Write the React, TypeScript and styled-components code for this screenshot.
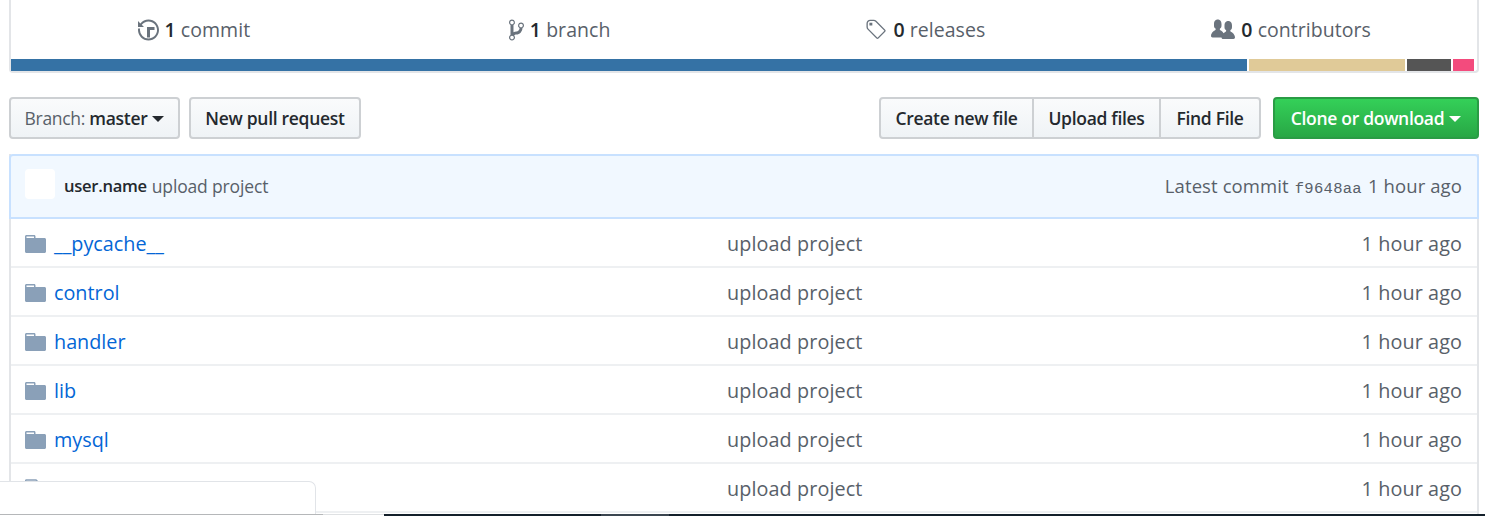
import React from 'react';
import styled, { createGlobalStyle } from 'styled-components';

const Global = createGlobalStyle`
  html, body { margin: 0; padding: 0; background: #fff; height: 516px; overflow: hidden; }
  body { font-family: "Open Sans", "Noto Sans", "Liberation Sans", sans-serif; }
  * { box-sizing: border-box; }
`;

const Page = styled.div`
  position: relative;
  width: 1485px;
  height: 516px;
  overflow: hidden;
  padding: 0 6px 0 9px;
  display: flex;
  flex-direction: column;
`;

const Summary = styled.div`
  height: 73px;
  border: 2px solid #e3e5e8;
  border-top: 0;
  border-radius: 0 0 4px 4px;
  display: flex;
  flex-direction: column;
`;

const Stats = styled.div`
  height: 59px;
  padding: 0 3px 0 0;
  display: grid;
  grid-template-columns: repeat(4, 1fr);
  align-items: center;
`;

const Stat = styled.div`
  display: flex;
  align-items: center;
  justify-content: center;
  gap: 6px;
  font-size: 19.5px;
  letter-spacing: 0.05px;
  color: #586069;
  white-space: nowrap;
`;

const Num = styled.b`
  font-weight: 600;
  color: #24292e;
`;

const LangBar = styled.div`
  height: 12px;
  display: flex;
  gap: 2px;
`;

const Lang = styled.span<{ $w: number; $c: string }>`
  width: ${p => p.$w}px;
  background: ${p => p.$c};
  flex: none;
`;

const Toolbar = styled.div`
  margin-top: 24px;
  height: 42px;
  display: flex;
  align-items: stretch;
  justify-content: space-between;
`;

const Group = styled.div`
  display: flex;
  gap: 9px;
`;

const Btn = styled.div<{ $w: number }>`
  display: flex;
  align-items: center;
  justify-content: center;
  gap: 5px;
  width: ${p => p.$w}px;
  height: 42px;
  border: 2px solid #cdd0d3;
  border-radius: 4px;
  background: linear-gradient(#fafbfc, #eff3f6);
  color: #24292e;
  font-size: 17.5px;
  font-weight: 600;
  letter-spacing: -0.3px;
  white-space: nowrap;
`;

const GreenBtn = styled(Btn)`
  border-color: #2a9c45;
  background: linear-gradient(#34d058, #28a745);
  color: #fff;
  margin-left: 3px;
`;

const Caret = styled.span<{ $c?: string }>`
  display: inline-block;
  width: 0;
  height: 0;
  border-left: 6px solid transparent;
  border-right: 6px solid transparent;
  border-top: 6px solid ${p => p.$c || '#24292e'};
  margin-top: 2px;
`;

const Light = styled.span`
  font-weight: 400;
  color: #586069;
`;

const BtnGroup = styled.div`
  display: flex;
  margin-left: -1px;
  & > ${Btn} { border-radius: 0; margin-left: -2px; }
  & > ${Btn}:first-child { border-radius: 4px 0 0 4px; margin-left: 0; }
  & > ${Btn}:last-child { border-radius: 0 4px 4px 0; }
`;

const Files = styled.div`
  margin-top: 15px;
  border: 2px solid #e3e5e8;
  border-bottom: 0;
  border-top: 0;
  flex: 1;
`;

const Commit = styled.div`
  height: 65px;
  margin: 0 -2px;
  background: #f1f8ff;
  border: 2px solid #c8e1ff;
  border-radius: 4px 4px 0 0;
  display: flex;
  align-items: center;
  padding: 0 15px 2px 14px;
  font-size: 17.5px;
  letter-spacing: -0.15px;
  color: #586069;
  white-space: nowrap;
`;

const Avatar = styled.span`
  width: 30px;
  height: 30px;
  border-radius: 4px;
  background: #fff;
  margin: 0 9px 3px 0;
  flex: none;
`;

const Author = styled.b`
  font-weight: 600;
  color: #24292e;
  margin-right: 5px;
  font-size: 16.6px;
  letter-spacing: -0.3px;
`;

const Right = styled.span`
  margin-left: auto;
  display: flex;
  align-items: baseline;
  gap: 6px;
  font-size: 18.5px;
  letter-spacing: 0.1px;
`;

const Sha = styled.code`
  font-family: "Liberation Mono", monospace;
  font-size: 15.5px;
  letter-spacing: 0.3px;
`;

const Row = styled.div`
  height: 49px;
  border-bottom: 2px solid #eef0f2;
  display: grid;
  grid-template-columns: 702px 1fr auto;
  align-items: center;
  padding: 2px 15px 0 14px;
  font-size: 19.8px;
  letter-spacing: 0.1px;
  color: #586069;
  white-space: nowrap;
`;

const Name = styled.span`
  display: flex;
  align-items: center;
  gap: 8px;
  color: #0366d6;
  letter-spacing: 0;
`;

const Overlay = styled.div`
  position: absolute;
  left: -2px;
  bottom: 2px;
  width: 318px;
  height: 33px;
  background: #fff;
  border: 1px solid #e1e4e8;
  border-bottom: 0;
  border-radius: 0 7px 0 0;
`;

const Strip = styled.div`
  position: absolute;
  left: 0;
  right: 0;
  bottom: 0;
  height: 2px;
  display: flex;
  background: #fff;
`;

const StripLight = styled.span`
  width: 384px;
  height: 1px;
  background: linear-gradient(to right, #b5b7b9 0 323px, #dfe1e3 323px);
`;

const StripDark = styled.span`
  flex: 1;
  display: flex;
  padding-left: 217px;
  background: #14202b;
`;

const StripTab = styled.span`
  width: 68px;
  background: #3b4650;
`;

const Icon = styled.svg`
  fill: currentColor;
  flex: none;
  display: block;
`;

const GrayIcon = styled(Icon)`
  color: #6a737d;
`;

const FolderIcon = styled(Icon)`
  color: #8aa0b8;
`;

const FileIcon = styled(Icon)`
  color: #8aa0b8;
  margin-right: 5px;
`;

const HistoryIcon = () => (
  <GrayIcon width="21" height="24" viewBox="0 0 14 16">
    <path fillRule="evenodd" d="M8 13H6V6h5v2H8v5zM7 1C4.81 1 2.87 2.02 1.59 3.59L0 2v4h4L2.5 4.5C3.55 3.17 5.17 2.3 7 2.3c3.14 0 5.7 2.56 5.7 5.7s-2.56 5.7-5.7 5.7A5.71 5.71 0 0 1 1.3 8c0-.34.03-.67.09-1H.08C.03 7.33 0 7.66 0 8c0 3.86 3.14 7 7 7s7-3.14 7-7-3.14-7-7-7z" />
  </GrayIcon>
);

const BranchIcon = () => (
  <GrayIcon width="15" height="24" viewBox="0 0 10 16">
    <path fillRule="evenodd" d="M10 5c0-1.11-.89-2-2-2a1.993 1.993 0 0 0-1 3.72v.3c-.02.52-.23.98-.63 1.38-.4.4-.86.61-1.38.63-.83.02-1.48.16-2 .45V4.72a1.993 1.993 0 0 0-1-3.72C.88 1 0 1.89 0 3a2 2 0 0 0 1 1.72v6.56c-.59.35-1 .99-1 1.72 0 1.11.89 2 2 2 1.11 0 2-.89 2-2 0-.53-.2-1-.53-1.36.09-.06.48-.41.59-.47.25-.11.56-.17.94-.17 1.05-.05 1.95-.45 2.75-1.25S8.95 7.77 9 6.73h-.02C9.59 6.37 10 5.73 10 5zM2 1.8c.66 0 1.2.55 1.2 1.2 0 .65-.55 1.2-1.2 1.2C1.35 4.2.8 3.65.8 3c0-.65.55-1.2 1.2-1.2zm0 12.41c-.66 0-1.2-.55-1.2-1.2 0-.65.55-1.2 1.2-1.2.65 0 1.2.55 1.2 1.2 0 .65-.55 1.2-1.2 1.2zm6-8c-.66 0-1.2-.55-1.2-1.2 0-.65.55-1.2 1.2-1.2.65 0 1.2.55 1.2 1.2 0 .65-.55 1.2-1.2 1.2z" />
  </GrayIcon>
);

const TagIcon = () => (
  <GrayIcon width="22" height="24" viewBox="0 0 15 16">
    <path fillRule="evenodd" d="M7.73 1.73C7.26 1.26 6.62 1 5.96 1H3.5C2.13 1 1 2.13 1 3.5v2.47c0 .66.27 1.3.73 1.77l6.06 6.06c.39.39 1.02.39 1.41 0l4.59-4.59a.996.996 0 0 0 0-1.41L7.73 1.73zM2.38 7.09c-.31-.3-.47-.7-.47-1.13V3.5c0-.88.72-1.59 1.59-1.59h2.47c.42 0 .83.16 1.13.47l6.14 6.13-4.73 4.73-6.13-6.15zM3 3h2v2H3V3z" />
  </GrayIcon>
);

const PeopleIcon = () => (
  <GrayIcon width="24" height="24" viewBox="0 0 16 16">
    <path fillRule="evenodd" d="M16 12.999c0 .439-.45 1-1 1H7.995c-.539 0-.994-.447-.995-.999H1c-.54 0-1-.561-1-1 0-2.634 3-4 3-4s.229-.409 0-1c-.841-.621-1.058-.59-1-3 .058-2.419 1.367-3 2.5-3s2.442.58 2.5 3c.058 2.41-.159 2.379-1 3-.229.59 0 1 0 1s1.549.711 2.42 2.088C9.196 9.369 10 8.999 10 8.999s.229-.409 0-1c-.841-.62-1.058-.59-1-3 .058-2.419 1.367-3 2.5-3s2.437.581 2.495 3c.059 2.41-.158 2.38-1 3-.229.59 0 1 0 1s3.005 1.366 3.005 4z" />
  </GrayIcon>
);

const Folder = () => (
  <FolderIcon width="21" height="24" viewBox="0 0 14 16" preserveAspectRatio="none">
    <path fillRule="evenodd" d="M13 4H7V3c0-.66-.31-1-1-1H1c-.55 0-1 .45-1 1v10c0 .55.45 1 1 1h12c.55 0 1-.45 1-1V5c0-.55-.45-1-1-1zM6 4H1V3h5v1z" />
  </FolderIcon>
);

const File = () => (
  <FileIcon width="16" height="21" viewBox="0 0 12 16" preserveAspectRatio="none">
    <path fillRule="evenodd" d="M6 5H2V4h4v1zM2 8h7V7H2v1zm0 2h7V9H2v1zm0 2h7v-1H2v1zm10-7.5V14c0 .55-.45 1-1 1H1c-.55 0-1-.45-1-1V2c0-.55.45-1 1-1h7.5L12 4.5zM11 5L8 2H1v12h10V5z" />
  </FileIcon>
);

const rows = [
  { name: '__pycache__', file: false },
  { name: 'control', file: false },
  { name: 'handler', file: false },
  { name: 'lib', file: false },
  { name: 'mysql', file: false },
  { name: 'supervisord', file: true },
];

export default function App() {
  return (
    <Page>
      <Global />
      <Summary>
        <Stats>
          <Stat><HistoryIcon /><span><Num>1</Num> commit</span></Stat>
          <Stat><BranchIcon /><span><Num>1</Num> branch</span></Stat>
          <Stat><TagIcon /><span><Num>0</Num> releases</span></Stat>
          <Stat><PeopleIcon /><span><Num>0</Num> contributors</span></Stat>
        </Stats>
        <LangBar>
          <Lang $w={1236} $c="#3572a5" />
          <Lang $w={156} $c="#e0ca98" />
          <Lang $w={44} $c="#555555" />
          <Lang $w={21} $c="#f34b7d" />
        </LangBar>
      </Summary>
      <Toolbar>
        <Group>
          <Btn $w={171}><span><Light>Branch:</Light> master</span><Caret /></Btn>
          <Btn $w={172}>New pull request</Btn>
        </Group>
        <Group>
          <BtnGroup>
            <Btn $w={155}>Create new file</Btn>
            <Btn $w={129}>Upload files</Btn>
            <Btn $w={102}>Find File</Btn>
          </BtnGroup>
          <GreenBtn $w={206}>Clone or download<Caret $c="#fff" /></GreenBtn>
        </Group>
      </Toolbar>
      <Files>
        <Commit>
          <Avatar />
          <Author>user.name</Author> upload project
          <Right>Latest commit <Sha>f9648aa</Sha> 1 hour ago</Right>
        </Commit>
        {rows.map(r => (
          <Row key={r.name}>
            <Name>{r.file ? <File /> : <Folder />}{r.name}</Name>
            <span>upload project</span>
            <span>1 hour ago</span>
          </Row>
        ))}
      </Files>
      <Overlay />
      <Strip><StripLight /><StripDark><StripTab /></StripDark></Strip>
    </Page>
  );
}
